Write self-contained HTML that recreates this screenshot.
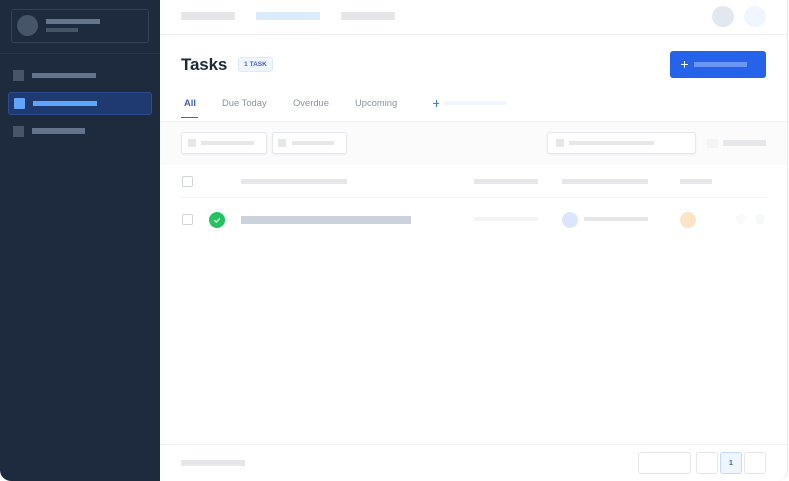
<!DOCTYPE html>
<html><head><meta charset="utf-8">
<style>
*{box-sizing:border-box;margin:0;padding:0}
html,body{width:789px;height:481px;background:#fff;overflow:hidden;font-family:"Liberation Sans",sans-serif}
#f{position:absolute;left:0;top:0;width:788px;height:481px;background:#fff;border-right:1px solid #e5e7eb;border-radius:0 0 11px 11px;overflow:hidden;filter:blur(.3px)}
.a{position:absolute}
.c{border-radius:50%}
.t{position:absolute;white-space:nowrap;line-height:12px;font-size:9.4px;color:#8b92a0}
.b{position:absolute;background:#fff;border:1px solid #e5e7eb;border-radius:3px}
.s{box-shadow:0 1px 2px rgba(0,0,0,.05)}
</style></head><body>
<div id="f">
<!-- sidebar -->
<div class="a" style="left:0;top:0;width:160px;height:481px;background:#1e2a3d"></div>
<div class="a" style="left:11px;top:9px;width:138px;height:34px;border:1px solid #334155;border-radius:3px"></div>
<div class="a c" style="left:17px;top:15px;width:21px;height:21px;background:#475569"></div>
<div class="a" style="left:46px;top:19px;width:54px;height:5px;background:#64748b"></div>
<div class="a" style="left:46px;top:28px;width:32px;height:4px;background:#475569"></div>
<div class="a" style="left:0;top:53px;width:160px;height:1px;background:#293548"></div>
<div class="a" style="left:13px;top:70px;width:11px;height:11px;background:#475569"></div>
<div class="a" style="left:32px;top:73px;width:64px;height:5px;background:#64748b"></div>
<div class="a" style="left:8px;top:92px;width:144px;height:23px;background:#1e3a6e;border:1px solid #2a4d8f;border-radius:3px"></div>
<div class="a" style="left:14px;top:98px;width:11px;height:11px;background:#60a5fa;border-radius:1px"></div>
<div class="a" style="left:33px;top:101px;width:64px;height:5px;background:#60a5fa"></div>
<div class="a" style="left:13px;top:126px;width:11px;height:11px;background:#475569"></div>
<div class="a" style="left:32px;top:128px;width:53px;height:6px;background:#64748b"></div>
<!-- top bar -->
<div class="a" style="left:181px;top:12px;width:54px;height:8px;background:#e5e7eb"></div>
<div class="a" style="left:256px;top:12px;width:64px;height:8px;background:#dbeafe"></div>
<div class="a" style="left:341px;top:12px;width:54px;height:8px;background:#e5e7eb"></div>
<div class="a c" style="left:712px;top:6px;width:22px;height:21px;background:#e2e8f0"></div>
<div class="a c" style="left:744px;top:6px;width:22px;height:21px;background:#eff6ff"></div>
<div class="a" style="left:160px;top:34px;width:627px;height:1px;background:#f0f1f3"></div>
<!-- heading -->
<div class="a" style="left:181px;top:55px;font-size:17px;line-height:20px;font-weight:bold;color:#1e293b;white-space:nowrap;letter-spacing:-.15px">Tasks</div>
<div class="a" style="left:238px;top:57px;width:35px;height:15px;background:#eff6ff;border:1px solid #dbeafe;border-radius:3px;font-size:6.5px;line-height:14px;font-weight:bold;color:#3b62d6;text-align:center;white-space:nowrap">1 TASK</div>
<div class="a" style="left:670px;top:51px;width:96px;height:27px;background:#2563eb;border-radius:3px"></div>
<div class="a" style="left:681px;top:64px;width:7px;height:1px;background:#fff"></div>
<div class="a" style="left:684px;top:61px;width:1px;height:7px;background:#fff"></div>
<div class="a" style="left:694px;top:62px;width:53px;height:5px;background:#6b96f5"></div>
<!-- tabs -->
<div class="t" style="left:184px;top:97px;font-weight:bold;color:#3b62c9">All</div>
<div class="t" style="left:222px;top:97px">Due Today</div>
<div class="t" style="left:293px;top:97px">Overdue</div>
<div class="t" style="left:355px;top:97px">Upcoming</div>
<div class="a" style="left:181px;top:117px;width:17px;height:1px;background:#3b62c9"></div>
<div class="a" style="left:433px;top:103px;width:6px;height:1px;background:#3b82f6"></div>
<div class="a" style="left:436px;top:100px;width:1px;height:7px;background:#3b82f6"></div>
<div class="a" style="left:443px;top:101px;width:64px;height:4px;background:#eff6ff;border-radius:2px"></div>
<div class="a" style="left:160px;top:121px;width:627px;height:1px;background:#f0f1f3"></div>
<!-- filters -->
<div class="a" style="left:160px;top:122px;width:627px;height:43px;background:#fbfbfc"></div>
<div class="b s" style="left:181px;top:132px;width:86px;height:22px"></div>
<div class="a" style="left:188px;top:139px;width:8px;height:8px;background:#e5e7eb"></div>
<div class="a" style="left:201px;top:141px;width:53px;height:4px;background:#e5e7eb"></div>
<div class="b s" style="left:272px;top:132px;width:75px;height:22px"></div>
<div class="a" style="left:278px;top:139px;width:8px;height:8px;background:#e5e7eb"></div>
<div class="a" style="left:292px;top:141px;width:42px;height:4px;background:#e5e7eb"></div>
<div class="b s" style="left:547px;top:132px;width:149px;height:22px"></div>
<div class="a" style="left:556px;top:139px;width:8px;height:8px;background:#e5e7eb"></div>
<div class="a" style="left:569px;top:141px;width:85px;height:4px;background:#e5e7eb"></div>
<div class="a" style="left:707px;top:139px;width:11px;height:9px;background:#f3f4f6"></div>
<div class="a" style="left:723px;top:140px;width:43px;height:6px;background:#e5e7eb"></div>
<!-- table head -->
<div class="a" style="left:182px;top:176px;width:11px;height:11px;background:#fff;border:1px solid #d1d5db;border-radius:2px"></div>
<div class="a" style="left:241px;top:179px;width:106px;height:5px;background:#e5e7eb"></div>
<div class="a" style="left:474px;top:179px;width:64px;height:5px;background:#e5e7eb"></div>
<div class="a" style="left:562px;top:179px;width:86px;height:5px;background:#e5e7eb"></div>
<div class="a" style="left:680px;top:179px;width:32px;height:5px;background:#e5e7eb"></div>
<div class="a" style="left:181px;top:197px;width:586px;height:1px;background:#f1f2f4"></div>
<!-- row -->
<div class="a" style="left:182px;top:214px;width:11px;height:11px;background:#fff;border:1px solid #d1d5db;border-radius:2px"></div>
<div class="a c" style="left:209px;top:212px;width:16px;height:16px;background:#22c55e"></div>
<svg class="a" style="left:209px;top:212px" width="16" height="16" viewBox="0 0 16 16"><path d="M5.2 8.2 7.2 10 10.8 6.4" fill="none" stroke="#fff" stroke-width="1.2"/></svg>
<div class="a" style="left:241px;top:216px;width:170px;height:8px;background:#cbd2dc"></div>
<div class="a" style="left:474px;top:217px;width:64px;height:4px;background:#f3f4f6"></div>
<div class="a c" style="left:562px;top:212px;width:16px;height:16px;background:#dbe6fe"></div>
<div class="a" style="left:584px;top:217px;width:64px;height:4px;background:#e5e7eb"></div>
<div class="a c" style="left:680px;top:212px;width:16px;height:16px;background:#fee4c4"></div>
<div class="a c" style="left:736px;top:214px;width:10px;height:10px;background:#fafafa"></div>
<div class="a c" style="left:755px;top:214px;width:10px;height:10px;background:#f6f7f7"></div>
<!-- footer -->
<div class="a" style="left:160px;top:444px;width:627px;height:1px;background:#f0f1f3"></div>
<div class="a" style="left:181px;top:460px;width:64px;height:6px;background:#e5e7eb"></div>
<div class="b" style="left:638px;top:452px;width:53px;height:22px"></div>
<div class="b" style="left:696px;top:452px;width:22px;height:22px"></div>
<div class="b" style="left:720px;top:452px;width:22px;height:22px;background:#eff6ff;border-color:#bfdbfe;font-size:7px;line-height:21px;font-weight:bold;color:#3b5bb5;text-align:center">1</div>
<div class="b" style="left:744px;top:452px;width:22px;height:22px"></div>
</div>
</body></html>
